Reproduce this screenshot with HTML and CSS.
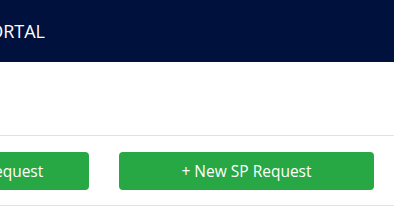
FILE: index.html
```html
<!DOCTYPE html>
<html lang="en">
<head>
<meta charset="utf-8">
<title>Portal</title>
<link rel="stylesheet" href="styles.css">
</head>
<body>
<header class="topbar">
  <div class="brand-box">
    <span class="brand">SP PORTAL</span>
  </div>
</header>
<main class="page">
  <section class="actions">
    <button class="btn btn-success" type="button">+ New Service Request</button>
    <button class="btn btn-success" type="button">+ New SP Request</button>
  </section>
</main>
</body>
</html>
```

FILE: styles.css
```css
html, body {
  margin: 0;
  padding: 0;
  background: #ffffff;
  overflow: hidden;
}
body {
  width: 394px;
  height: 222px;
  font-family: "Open Sans", "Noto Sans", sans-serif;
}
.topbar {
  height: 62px;
  background: #01113d;
  display: flex;
  align-items: center;
  overflow: hidden;
}
.brand-box {
  width: 45px;
  flex: none;
  display: flex;
  justify-content: flex-end;
}
.brand {
  flex: none;
  color: #ffffff;
  font-size: 18px;
  line-height: 24px;
  white-space: nowrap;
}
.page {
  padding-top: 73px;
}
.actions {
  border-top: 1px solid #dee2e6;
  border-bottom: 1px solid #dee2e6;
  padding: 16px 0 15px;
  display: flex;
  gap: 30px;
  margin-left: -166px;
  width: 700px;
}
.btn {
  width: 255px;
  height: 38px;
  flex: none;
  border: 0;
  border-radius: 4px;
  font-family: "Open Sans", "Noto Sans", sans-serif;
  font-size: 15.5px;
  color: #ffffff;
  text-align: center;
  padding: 0;
  white-space: nowrap;
}
.btn-success {
  background: #28a745;
}
```
